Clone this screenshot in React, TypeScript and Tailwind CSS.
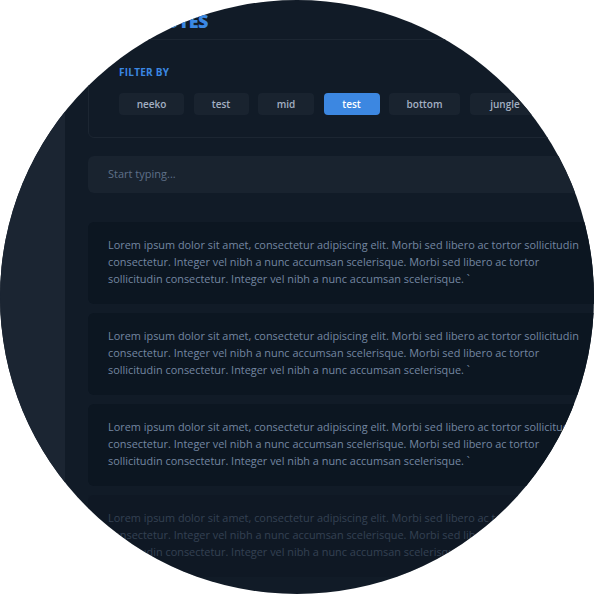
import React from 'react';

const chips = [
  { label: 'neeko', w: 'w-[65px]', active: false },
  { label: 'test', w: 'w-[55px]', active: false },
  { label: 'mid', w: 'w-[56px]', active: false },
  { label: 'test', w: 'w-[56px]', active: true },
  { label: 'bottom', w: 'w-[71px]', active: false },
  { label: 'jungle', w: 'w-[71px]', active: false },
];

const lines = [
  'Lorem ipsum dolor sit amet, consectetur adipiscing elit. Morbi sed libero ac tortor sollicitudin',
  'consectetur. Integer vel nibh a nunc accumsan scelerisque. Morbi sed libero ac tortor',
  'sollicitudin consectetur. Integer vel nibh a nunc accumsan scelerisque. `',
];

function NoteCard({ faded }: { faded?: boolean }) {
  return (
    <div className={`bg-[#0c1621] rounded-md pl-[20px] pt-[14px] pb-[17px] ${faded ? 'opacity-35' : ''}`}>
      {lines.map((l, i) => (
        <p key={i} className="whitespace-nowrap text-[10.9px] leading-[17px] font-medium text-[#7487a2]">
          {l}
        </p>
      ))}
    </div>
  );
}

export default function App() {
  return (
    <div className="w-[594px] h-[594px] bg-white" style={{ fontFamily: '"Open Sans", "Noto Sans", sans-serif' }}>
      <div className="w-[594px] h-[594px] rounded-full overflow-hidden flex bg-[#111b27]">
        {/* 사이드바 */}
        <aside className="w-[65px] shrink-0 bg-[#1b2532]" />

        <main className="w-[700px] shrink-0 pl-[23px] flex flex-col">
          {/* 제목 */}
          <h1 className="h-[39px] pl-[62px] pt-[10px] text-[18px] leading-[22px] font-extrabold text-[#3b88e3] tracking-tight">
            NOTES
          </h1>

          {/* 필터 */}
          <section className="border border-[#1c2632] rounded-md pl-[30px] pt-[26px] pb-[22px]">
            <h3 className="text-[10px] leading-[12px] font-bold text-[#3b88e3] tracking-wide">FILTER BY</h3>
            <div className="flex gap-[9.5px] mt-[15px]">
              {chips.map((c, i) => (
                <button
                  key={i}
                  className={`${c.w} h-[22px] rounded-[4px] text-[10px] font-semibold flex items-center justify-center ${
                    c.active ? 'bg-[#3c87e1] text-white' : 'bg-[#19232f] text-[#a3b0c3]'
                  }`}
                >
                  {c.label}
                </button>
              ))}
            </div>
          </section>

          {/* 검색 */}
          <div className="mt-[18px] h-[37px] rounded-md bg-[#19232f] pl-[20px] flex items-center">
            <span className="text-[11px] font-medium text-[#5f7089]">Start typing...</span>
          </div>

          {/* 노트 리스트 */}
          <div className="mt-[29px] flex flex-col gap-[9px]">
            <NoteCard />
            <NoteCard />
            <NoteCard />
            <NoteCard faded />
          </div>
        </main>
      </div>
    </div>
  );
}
